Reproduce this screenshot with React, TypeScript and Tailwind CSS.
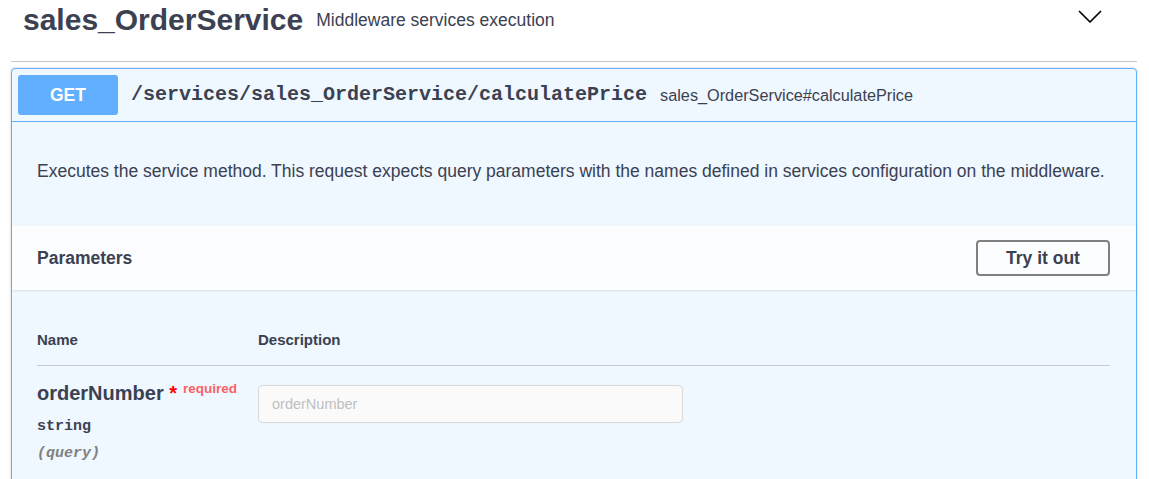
const sans = "font-['Liberation_Sans',Arial,sans-serif]";
const mono = "font-['Liberation_Mono','Courier_New',monospace]";

function Chevron() {
  return (
    <svg viewBox="0 0 24 14" className="w-[24px] h-[14px] self-start mt-[8px] mr-[35px] ml-auto" fill="none">
      <polyline points="1.5,1.5 12,12 22.5,1.5" stroke="#000" strokeWidth="1.7" strokeLinecap="round" strokeLinejoin="round" />
    </svg>
  );
}

export default function App() {
  return (
    <div className={`min-h-screen bg-white text-[#3b4151] ${sans}`}>
      <div className="pl-[11px] pr-[12px]">
        {/* tag header */}
        <div className="flex items-center pl-[12px] pt-[2px] pb-[23px] border-b border-[#c4c6cb]">
          <h4 className="text-[30px] leading-[36px] font-bold">sales_OrderService</h4>
          <small className="ml-[13px] text-[17.5px] leading-[20px]">Middleware services execution</small>
          <Chevron />
        </div>

        {/* operation block */}
        <div className="mt-[6px] border border-[#61affe] rounded-[4px] bg-[#eff7ff] shadow-[0_0_3px_rgba(0,0,0,0.19)] pb-[40px]">
          <div className="flex items-center p-[6px] border-b border-[#61affe]">
            <span className="w-[100px] h-[40px] flex items-center justify-center rounded-[3px] bg-[#61affe] text-white font-bold text-[17.5px]">
              GET
            </span>
            <span className={`ml-[13px] text-[20px] font-bold ${mono}`}>/services/sales_OrderService/calculatePrice</span>
            <span className="ml-[13px] text-[16.25px]">sales_OrderService#calculatePrice</span>
          </div>

          <div className="px-[25px] pt-[37px] pb-[43px]">
            <p className="text-[17.5px] leading-[24px]">
              Executes the service method. This request expects query parameters with the names defined in services configuration on the middleware.
            </p>
          </div>

          <div className="h-[64px] flex items-center justify-between pl-[25px] pr-[26px] bg-white/80 shadow-[0_1px_2px_rgba(0,0,0,0.1)]">
            <h4 className="text-[17.5px] font-bold">Parameters</h4>
            <button className="w-[134px] h-[36px] border-2 border-[#808080] rounded-[4px] text-[17.5px] font-bold text-[#3b4151]">
              Try it out
            </button>
          </div>

          <div className="pl-[25px] pr-[26px] pt-[41px]">
            <div className="flex pb-[16px] border-b border-[#c6cbd3] text-[15px] leading-[18px] font-bold">
              <div className="w-[221px]">Name</div>
              <div>Description</div>
            </div>
            <div className="flex pt-[15px]">
              <div className="w-[221px]">
                <div className="text-[20px] leading-[24px] font-bold">
                  orderNumber<span className="text-[#ff0000]">&nbsp;*</span>
                  <span className="relative -top-[7px] pl-[6px] text-[13.5px] font-bold text-[#f96366]">required</span>
                </div>
                <div className={`mt-[10px] text-[15px] leading-[18px] font-bold ${mono}`}>string</div>
                <div className={`mt-[9px] text-[15px] leading-[18px] font-bold italic text-[#808080] ${mono}`}>(query)</div>
              </div>
              <div className="mt-[4px]">
                <input
                  placeholder="orderNumber"
                  className="w-[425px] h-[38px] pl-[13px] bg-[#fafafa] border border-[#d9d9d9] rounded-[4px] text-[14.5px] placeholder:text-[#bfbfbf] outline-none"
                />
              </div>
            </div>
          </div>
        </div>
      </div>
    </div>
  );
}
